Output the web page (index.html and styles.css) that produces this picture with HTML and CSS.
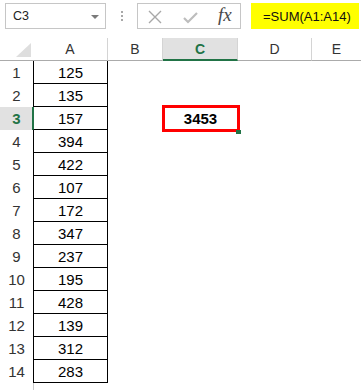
FILE: index.html
```html
<!DOCTYPE html>
<html>
<head>
<meta charset="utf-8">
<link rel="stylesheet" href="styles.css">
</head>
<body>
<div class="toolbar">
  <div class="namebox"><span class="nb-text">C3</span><span class="nb-arrow"></span></div>
  <div class="dots"><i></i><i></i><i></i></div>
  <div class="fbtns">
    <svg class="ico-x" width="14" height="14" viewBox="0 0 14 14"><path d="M1 1 L13 13 M13 1 L1 13" stroke="#a8a8a8" stroke-width="1.4" fill="none"/></svg>
    <svg class="ico-check" width="15" height="13" viewBox="0 0 15 13"><path d="M1 7 L5 11 L14 2" stroke="#bdbdbd" stroke-width="2.2" fill="none"/></svg>
    <span class="fx">fx</span>
  </div>
  <div class="formula">=SUM(A1:A14)</div>
</div>
<div class="sheet">
  <div class="ch corner"><span class="tri"></span></div>
  <div class="ch">A</div>
  <div class="ch">B</div>
  <div class="ch sel">C</div>
  <div class="ch">D</div>
  <div class="ch last">E</div>

  <div class="rh">1</div><div class="ca">125</div><div class="c"></div><div class="c"></div><div class="c"></div><div class="c"></div>
  <div class="rh">2</div><div class="ca">135</div><div class="c"></div><div class="c"></div><div class="c"></div><div class="c"></div>
  <div class="rh rsel">3</div><div class="ca casel">157</div><div class="c"></div><div class="c active">3453<span class="handle"></span></div><div class="c"></div><div class="c"></div>
  <div class="rh">4</div><div class="ca">394</div><div class="c"></div><div class="c"></div><div class="c"></div><div class="c"></div>
  <div class="rh">5</div><div class="ca">422</div><div class="c"></div><div class="c"></div><div class="c"></div><div class="c"></div>
  <div class="rh">6</div><div class="ca">107</div><div class="c"></div><div class="c"></div><div class="c"></div><div class="c"></div>
  <div class="rh">7</div><div class="ca">172</div><div class="c"></div><div class="c"></div><div class="c"></div><div class="c"></div>
  <div class="rh">8</div><div class="ca">347</div><div class="c"></div><div class="c"></div><div class="c"></div><div class="c"></div>
  <div class="rh">9</div><div class="ca">237</div><div class="c"></div><div class="c"></div><div class="c"></div><div class="c"></div>
  <div class="rh">10</div><div class="ca">195</div><div class="c"></div><div class="c"></div><div class="c"></div><div class="c"></div>
  <div class="rh">11</div><div class="ca">428</div><div class="c"></div><div class="c"></div><div class="c"></div><div class="c"></div>
  <div class="rh">12</div><div class="ca">139</div><div class="c"></div><div class="c"></div><div class="c"></div><div class="c"></div>
  <div class="rh">13</div><div class="ca">312</div><div class="c"></div><div class="c"></div><div class="c"></div><div class="c"></div>
  <div class="rh">14</div><div class="ca">283</div><div class="c"></div><div class="c"></div><div class="c"></div><div class="c"></div>
  <div class="rh"></div><div class="ca empty"></div><div class="c"></div><div class="c"></div><div class="c"></div><div class="c"></div>
</div>
</body>
</html>
```
FILE: styles.css
```css
*, *::before, *::after { box-sizing: border-box; }
html, body { margin: 0; padding: 0; background: #fff; }
body {
  width: 361px;
  height: 390px;
  overflow: hidden;
  font-family: "Liberation Sans", Arial, sans-serif;
  color: #000;
}
.toolbar {
  height: 38px;
  display: flex;
  align-items: flex-start;
  padding-top: 3px;
}
.namebox {
  margin-left: 5px;
  width: 101px;
  height: 26px;
  border: 1px solid #c6c6c6;
  display: flex;
  align-items: center;
  justify-content: space-between;
  padding: 0 6px 0 7px;
  font-size: 12.5px;
  color: #222;
}
.nb-arrow {
  width: 0;
  height: 0;
  border-left: 4px solid transparent;
  border-right: 4px solid transparent;
  border-top: 4px solid #7a7a7a;
  margin-top: 1px;
}
.dots {
  width: 31px;
  height: 26px;
  display: flex;
  flex-direction: column;
  align-items: center;
  justify-content: center;
  gap: 2px;
}
.dots i {
  display: block;
  width: 2px;
  height: 2px;
  background: #a8a8a8;
}
.fbtns {
  width: 104px;
  height: 26px;
  border: 1px solid #c6c6c6;
  display: flex;
  align-items: center;
  padding-left: 10px;
}
.ico-x { margin-top: 1px; }
.ico-check { margin-left: 21px; margin-top: 2px; }
.fx {
  margin-left: 20px;
  font-family: "Liberation Serif", "Times New Roman", serif;
  font-style: italic;
  font-size: 19px;
  color: #4a4a4a;
  line-height: 1;
  margin-top: -3px;
}
.formula {
  margin-left: 10px;
  width: 108px;
  height: 26px;
  background: #ffff00;
  font-size: 13px;
  display: flex;
  align-items: center;
  padding-left: 12px;
  color: #111;
}
.sheet {
  display: grid;
  grid-template-columns: 33px 75px 55px 75px 74px 49px;
  grid-template-rows: 23px repeat(15, 23px);
}
.ch {
  height: 23px;
  border-right: 1px solid #d4d4d4;
  border-bottom: 1px solid #ababab;
  display: flex;
  align-items: center;
  justify-content: center;
  font-size: 14px;
  color: #333;
}
.ch.last { border-right: none; }
.ch.sel {
  background: #e1e1e1;
  border-bottom: 2px solid #217346;
  color: #217346;
  font-weight: bold;
  padding-top: 1px;
}
.corner {
  position: relative;
  border-right: none;
}
.tri {
  position: absolute;
  right: 2px;
  bottom: 3px;
  width: 0;
  height: 0;
  border-left: 15px solid transparent;
  border-bottom: 14px solid #dedede;
}
.rh {
  display: flex;
  align-items: center;
  justify-content: center;
  font-size: 15px;
  color: #333;
}
.rh.rsel {
  background: #e1e1e1;
  color: #217346;
  font-weight: bold;
  box-shadow: inset -1px 0 0 #217346;
}
.ca {
  border-left: 1px solid #000;
  border-right: 1px solid #000;
  border-bottom: 1px solid #000;
  display: flex;
  align-items: center;
  justify-content: center;
  font-size: 15px;
}
.ca.casel { border-left-color: #217346; }
.ca.empty {
  border-left-color: #c8c8c8;
  border-right: none;
  border-bottom: none;
}
.c {
  display: flex;
  align-items: center;
  justify-content: center;
  font-size: 15px;
}
.active {
  position: relative;
  font-weight: bold;
}
.active::after {
  content: "";
  position: absolute;
  left: -1px;
  top: -2px;
  width: 78px;
  height: 27px;
  border: 3px solid #ff0000;
}
.handle {
  position: absolute;
  right: -3px;
  bottom: -4px;
  width: 5px;
  height: 4px;
  background: #217346;
  z-index: 2;
}
```
